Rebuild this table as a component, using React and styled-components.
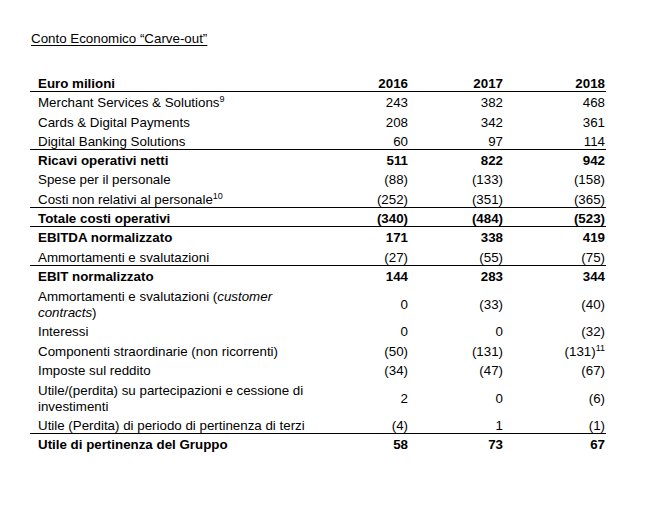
import React from 'react';
import styled, { createGlobalStyle } from 'styled-components';

const GlobalStyle = createGlobalStyle`
  html, body {
    margin: 0;
    padding: 0;
    background: #ffffff;
  }
  body {
    font-family: "Liberation Sans", Arial, sans-serif;
    color: #000000;
  }
`

const Page = styled.div`
  width: 645px;
  height: 518px;
  padding: 31px 0 0 30px;
  box-sizing: border-box;
`

const Title = styled.h1`
  margin: 0 0 0 1px;
  font-size: 13.33px;
  font-weight: normal;
  line-height: 16px;
  text-decoration: underline;
  text-underline-offset: 2px;
`

const Table = styled.div`
  width: 576px;
  margin-top: 26px;
`

const Row = styled.div`
  display: grid;
  grid-template-columns: 280px 99px 95px 102px;
  align-items: center;
  padding: ${({ $tall }) => $tall ? '3.5px 0 0.5px' : '3px 0 0.3px'};
  line-height: 16px;
  font-size: 13.33px;
  font-weight: ${({ $bold }) => $bold ? 'bold' : 'normal'};
  box-shadow: ${({ $rule }) => $rule ? 'inset 0 -1px 0 #000' : 'none'};
`

const Label = styled.div`
  padding-left: 8px;
  padding-right: 2px;

  em {
    font-style: italic;
  }
`

const Num = styled.div`
  text-align: right;
  white-space: nowrap;
  padding-right: 1px;
`

const Sup = styled.sup`
  font-size: 9px;
  line-height: 0;
  vertical-align: 5px;
`

const rows = [
  { label: 'Euro milioni', v: ['2016', '2017', '2018'], bold: true, rule: true },
  { label: <>Merchant Services &amp; Solutions<Sup>9</Sup></>, v: ['243', '382', '468'] },
  { label: 'Cards & Digital Payments', v: ['208', '342', '361'] },
  { label: 'Digital Banking Solutions', v: ['60', '97', '114'], rule: true },
  { label: 'Ricavi operativi netti', v: ['511', '822', '942'], bold: true },
  { label: 'Spese per il personale', v: ['(88)', '(133)', '(158)'] },
  { label: <>Costi non relativi al personale<Sup>10</Sup></>, v: ['(252)', '(351)', '(365)'], rule: true },
  { label: 'Totale costi operativi', v: ['(340)', '(484)', '(523)'], bold: true, rule: true },
  { label: 'EBITDA normalizzato', v: ['171', '338', '419'], bold: true },
  { label: 'Ammortamenti e svalutazioni', v: ['(27)', '(55)', '(75)'], rule: true },
  { label: 'EBIT normalizzato', v: ['144', '283', '344'], bold: true },
  { label: <>Ammortamenti e svalutazioni (<em>customer contracts</em>)</>, v: ['0', '(33)', '(40)'], tall: true },
  { label: 'Interessi', v: ['0', '0', '(32)'] },
  { label: 'Componenti straordinarie (non ricorrenti)', v: ['(50)', '(131)', <>(131)<Sup>11</Sup></>] },
  { label: 'Imposte sul reddito', v: ['(34)', '(47)', '(67)'] },
  { label: 'Utile/(perdita) su partecipazioni e cessione di investimenti', v: ['2', '0', '(6)'], tall: true },
  { label: 'Utile (Perdita) di periodo di pertinenza di terzi', v: ['(4)', '1', '(1)'], rule: true },
  { label: 'Utile di pertinenza del Gruppo', v: ['58', '73', '67'], bold: true },
];

export default function App() {
  return (
    <>
      <GlobalStyle />
      <Page>
        <Title>Conto Economico “Carve-out”</Title>
        <Table>
          {rows.map((r, i) => (
            <Row key={i} $bold={r.bold} $rule={r.rule} $tall={r.tall}>
              <Label>{r.label}</Label>
              {r.v.map((v, j) => (
                <Num key={j}>{v}</Num>
              ))}
            </Row>
          ))}
        </Table>
      </Page>
    </>
  );
}
